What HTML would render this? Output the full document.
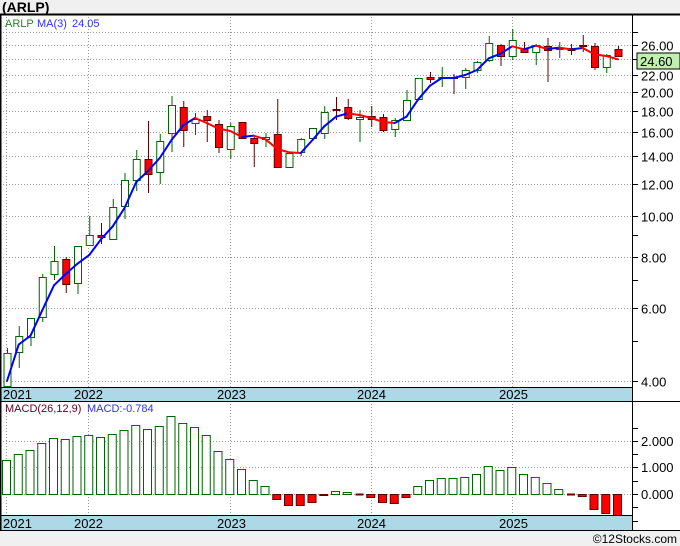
<!DOCTYPE html>
<html><head><meta charset="utf-8"><style>
body{margin:0;width:680px;height:546px;overflow:hidden;background:#f0f0f0;font-family:"Liberation Sans",sans-serif;}
svg{display:block}
</style></head><body>
<svg id="s" width="680" height="546" xmlns="http://www.w3.org/2000/svg" font-family="Liberation Sans, sans-serif">
<rect x="0" y="0" width="680" height="546" fill="#f0f0f0"/>
<text x="2" y="12" font-size="14" font-weight="bold" fill="#000">(ARLP)</text>
<rect x="0" y="14" width="680" height="516" fill="#fff"/>
<g id="g"></g>
</svg>
<script>
var g=document.getElementById('g'),h='';
function P(p){return 381-179.6*Math.log(p/4);}
var X=function(i){return 7+11.75*i;};
var dash='stroke="#999" stroke-dasharray="1,2" stroke-width="1"';
[4,6,8,10,12,14,16,18,20,22,24,26,28].forEach(function(p){var y=Math.round(P(p))+.5;h+='<line x1="0" x2="632" y1="'+y+'" y2="'+y+'" '+dash+'/>';h+='<line x1="632" x2="638" y1="'+y+'" y2="'+y+'" stroke="#000"/>';if(p!=24&&p!=28)h+='<text x="641" y="'+(y+5)+'" font-size="13" fill="#000">'+p.toFixed(2)+'</text>';});
[5,7,9].forEach(function(p){var y=Math.round(P(p))+.5;h+='<line x1="632" x2="638" y1="'+y+'" y2="'+y+'" stroke="#000"/>';});
[[441,'2.000'],[467,'1.000'],[494,'0.000']].forEach(function(a){h+='<line x1="0" x2="632" y1="'+(a[0]+.5)+'" y2="'+(a[0]+.5)+'" '+dash+'/><line x1="632" x2="638" y1="'+(a[0]+.5)+'" y2="'+(a[0]+.5)+'" stroke="#000"/><text x="641" y="'+(a[0]+5)+'" font-size="13">'+a[1]+'</text>';});
[428,454,481,507,521].forEach(function(y){h+='<line x1="632" x2="638" y1="'+(y+.5)+'" y2="'+(y+.5)+'" stroke="#000"/>';});
[6.5,88.5,230.5,371.5,512.5].forEach(function(x){h+='<line x1="'+x+'" x2="'+x+'" y1="14" y2="388" '+dash+'/><line x1="'+x+'" x2="'+x+'" y1="401" y2="516" '+dash+'/>';});
var C=[[348,353,386,388,1],[326,336,352,368,1],[318,318,337,346,1],[274,277,317,322,1],[246,261,274,280,1],[257,259,284,293,0],[246,246,283,294,1],[216,235,245,245,1],[223,235,237,244,0],[199,207,239,239,1],[173,180,206,219,1],[150,159,180,191,1],[121,159,174,193,0],[134,141,172,184,1],[96,105,133,152,1],[101,107,130,147,0],[113,119,123,135,1],[110,116,120,142,0],[120,124,147,153,0],[123,126,149,159,1],[122,122,138,138,0],[135,138,143,167,0],[133,137,139,147,1],[99,134,167,167,0],[153,153,167,168,1],[138,139,152,156,1],[128,128,138,140,1],[106,112,133,139,1],[97,109,110,120,0],[99,107,118,120,0],[110,117,119,142,1],[106,116,119,127,0],[114,117,130,132,0],[118,120,129,137,1],[90,100,120,120,1],[78,78,99,99,1],[72,77,79,83,0],[67,77,78,87,1],[74,77,78,94,0],[68,70,77,89,1],[61,62,70,73,1],[36,43,60,62,1],[44,45,56,66,0],[29,40,56,60,1],[42,48,52,53,0],[44,45,52,65,1],[38,46,50,82,0],[42,48,49,58,1],[44,48,50,55,0],[35,45,46,52,0],[43,46,67,70,0],[54,55,67,73,1],[46,49,56,57,0]];
var cl=[];
C.forEach(function(c,i){var x=X(i),col=c[4]?'#006400':'#600000';
h+='<line x1="'+(x+.5)+'" x2="'+(x+.5)+'" y1="'+c[0]+'" y2="'+c[3]+'" stroke="'+col+'" stroke-width="1"/>';
var bh=Math.max(c[2]-c[1],1);
h+='<rect x="'+(x-3)+'" y="'+(c[1]+.5)+'" width="7" height="'+bh+'" fill="'+(c[4]?'#fff':'#f00')+'" stroke="'+col+'" stroke-width="1"/>';
cl.push(c[4]?c[1]:c[2]);});
var ma=[];for(var i=0;i<cl.length;i++){var a=cl.slice(Math.max(0,i-2),i+1);ma.push(a.reduce(function(s,v){return s+v},0)/a.length);}
ma[0]=381;
for(var i=1;i<ma.length;i++){var col=ma[i]>ma[i-1]?'#ff0000':'#0000ff';h+='<line x1="'+X(i-1)+'" y1="'+ma[i-1]+'" x2="'+X(i)+'" y2="'+ma[i]+'" stroke="'+col+'" stroke-width="2" stroke-linecap="round"/>';}
var M=[460,454,450,443,438,439,436,435,437,434,430,425,429,426,416,423,427,435,451,459,469,480,486,499,505,505,502,495,491,492,494,497,502,503,497,486,480,478,478,477,474,466,470,467,474,477,483,489,494,496,509,513,515];
M.forEach(function(y,i){var x=X(i);if(y<494){h+='<rect x="'+(x-4.5)+'" y="'+(y+.5)+'" width="8" height="'+(494-y)+'" fill="#fff" stroke="#006400"/>';}else if(y>494){h+='<rect x="'+(x-4.5)+'" y="494.5" width="8" height="'+(y-494)+'" fill="#f00" stroke="#600000"/>';}else{h+='<line x1="'+(x-4)+'" x2="'+(x+4)+'" y1="494.5" y2="494.5" stroke="#600000" stroke-width="2"/>';}});
h+='<rect x="0" y="388" width="632" height="13" fill="#add8e6"/><rect x="0" y="516" width="632" height="14" fill="#add8e6"/>';
[[3,'2021'],[74,'2022'],[217,'2023'],[357,'2024'],[499,'2025']].forEach(function(a){h+='<text x="'+a[0]+'" y="399" font-size="13">'+a[1]+'</text><text x="'+a[0]+'" y="528" font-size="13">'+a[1]+'</text>';});
h+='<line x1="0" x2="632" y1="387.5" y2="387.5" stroke="#000"/><line x1="0" x2="680" y1="401.5" y2="401.5" stroke="#000"/><line x1="0" x2="632" y1="515.5" y2="515.5" stroke="#000"/><line x1="0" x2="680" y1="530.5" y2="530.5" stroke="#000"/><line x1="0" x2="680" y1="14.5" y2="14.5" stroke="#000" stroke-width="2"/><line x1="632.5" x2="632.5" y1="14" y2="530" stroke="#000"/><line x1="0.5" x2="0.5" y1="14" y2="530" stroke="#000" stroke-width="2"/>';
h+='<rect x="637" y="53" width="43" height="16" fill="#c0f0b0" stroke="#000"/><text x="640" y="66" font-size="13">24.60</text>';
h+='<text x="5" y="27" font-size="11" fill="#228822">ARLP</text><text x="37" y="27" font-size="11" fill="#3030ff">MA(3)</text><text x="72" y="27" font-size="11" fill="#3030ff">24.05</text>';
h+='<text x="5" y="412" font-size="11" fill="#600020">MACD(26,12,9)</text><text x="87" y="412" font-size="11" fill="#3030ff">MACD:-0.784</text>';
h+='<text x="677" y="543" font-size="12" text-anchor="end">©12Stocks.com</text>';
g.innerHTML=h;
</script>
</body></html>
